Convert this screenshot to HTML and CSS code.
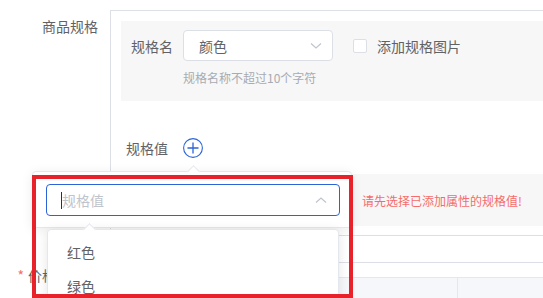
FILE: index.html
```html
<!DOCTYPE html>
<html lang="zh-CN">
  <head>
    <meta charset="UTF-8" />
    <meta name="viewport" content="width=device-width, initial-scale=1.0" />
    <title>商品规格</title>
    <link rel="stylesheet" href="styles.css">
  </head>
  <body>
    <div class="form-row">
      <label class="form-label">商品规格</label>
      <div class="spec-box">
        <div class="spec-name">
          <div class="name-row">
            <span class="item-label">规格名</span>
            <div class="select">
              <span>颜色</span>
              <svg class="chevron" width="12" height="8" viewBox="0 0 12 8"><path d="M1 1.5 L6 6 L11 1.5" fill="none" stroke="#c0c4cc" stroke-width="1.2"/></svg>
            </div>
            <label class="checkbox"><span class="box"></span>添加规格图片</label>
          </div>
          <p class="hint">规格名称不超过10个字符</p>
        </div>

        <div class="value-row">
          <span class="value-label">规格值</span>
          <span class="add-btn">
            <svg width="20" height="20" viewBox="0 0 20 20"><circle cx="10" cy="10" r="9.4" fill="none" stroke="#2c64d8" stroke-width="1.1"/><path d="M10 4.5 V15.5 M4.5 10 H15.5" stroke="#2c64d8" stroke-width="1.3"/></svg>
          </span>
        </div>

        <div class="value-box">
          <div class="value-slot"></div>
          <span class="error">请先选择已添加属性的规格值!</span>
        </div>
      </div>
    </div>

    <div class="form-row price-row">
      <label class="form-label required">价格及库存</label>
      <div class="sku-table">
        <div class="table-top"></div>
        <div class="table-head">
          <div class="th th-first"></div>
          <div class="th">规格值</div>
          <div class="th">规格值</div>
        </div>
      </div>
    </div>

    <!-- popover opened from the add button -->
    <div class="popover">
      <div class="fake-input">
        <span class="caret"></span>
        <span class="placeholder">规格值</span>
        <svg class="chevron-up" width="12" height="8" viewBox="0 0 12 8"><path d="M1 6.5 L6 2 L11 6.5" fill="none" stroke="#c0c4cc" stroke-width="1.2"/></svg>
      </div>
    </div>

    <ul class="dropdown">
      <li>红色</li>
      <li>绿色</li>
    </ul>

    <div class="highlight"></div>
  </body>
</html>
```

FILE: styles.css
```css
* {
  box-sizing: border-box;
  margin: 0;
  padding: 0;
}

body {
  font-family: "Noto Sans CJK SC", "Noto Sans", sans-serif;
  font-size: 14px;
  color: #606266;
  background: #fff;
  overflow: hidden;
  height: 298px;
  position: relative;
}

.form-row {
  display: flex;
  margin-top: 10px;
}

.form-label {
  width: 110px;
  flex-shrink: 0;
  text-align: right;
  padding: 6px 12px 0 0;
  line-height: 20px;
}

.spec-box {
  flex: 1;
  border: 1px solid #dcdfe6;
  border-right: none;
  padding: 10px 0 9px 10px;
}

.spec-name {
  background: #f7f7f7;
  padding: 9px 10px 15px;
}

.name-row {
  display: flex;
  align-items: center;
}

.item-label {
  width: 52px;
}

.select {
  width: 150px;
  height: 31px;
  border: 1px solid #dcdfe6;
  border-radius: 4px;
  background: #fff;
  display: flex;
  align-items: center;
  justify-content: space-between;
  padding: 0 10px 0 15px;
  color: #606266;
}

.checkbox {
  display: flex;
  align-items: center;
  margin-left: 20px;
}

.checkbox .box {
  width: 14px;
  height: 14px;
  border: 1px solid #dcdfe6;
  border-radius: 2px;
  background: #fff;
  margin-right: 10px;
}

.hint {
  margin: 9px 0 0 52px;
  font-size: 12px;
  line-height: 16px;
  color: #a8abb2;
}

.value-row {
  display: flex;
  align-items: center;
  margin: 37px 0 0 5px;
  height: 20px;
}

.add-btn {
  display: flex;
  margin-left: 15px;
}

.value-box {
  display: flex;
  align-items: center;
  margin-top: 16px;
  height: 52px;
  background: #f7f7f7;
}

.value-slot {
  width: 231px;
  flex-shrink: 0;
}

.error {
  margin-left: 10px;
  font-size: 12px;
  color: #f56c6c;
  white-space: nowrap;
}

.price-row {
  margin-top: 26px;
}

.required::before {
  content: "*";
  color: #f56c6c;
  margin-right: 4px;
}

.price-row .form-label {
  padding-top: 3px;
}

.sku-table {
  flex: 1;
  margin-left: 11px;
  border-top: 1px solid #dcdfe6;
}

.table-top {
  height: 15px;
  border-bottom: 1px solid #e4e7ed;
}

.table-head {
  display: flex;
  background: #f5f7fa;
  height: 50px;
}

.th {
  width: 121px;
  padding: 16px 0 0 18px;
  line-height: 20px;
  border-right: 1px solid #e4e7ed;
  white-space: nowrap;
}

.th-first {
  width: 216px;
}

.popover {
  position: absolute;
  left: 32px;
  top: 171px;
  width: 320px;
  height: 57px;
  background: #fff;
  border: 1px solid #e4e7ed;
  border-radius: 4px;
  box-shadow: 0 2px 12px rgba(0, 0, 0, 0.08);
  padding: 12px 0 0 13px;
}

.popover::before {
  content: "";
  position: absolute;
  left: 156px;
  top: -5px;
  width: 8px;
  height: 8px;
  background: #fff;
  border-left: 1px solid #e4e7ed;
  border-top: 1px solid #e4e7ed;
  transform: rotate(45deg);
}

.fake-input {
  width: 294px;
  height: 32px;
  border: 1px solid #2c64d8;
  border-radius: 4px;
  display: flex;
  align-items: center;
  padding: 0 12px 0 14px;
}

.caret {
  width: 1px;
  height: 17px;
  background: #303133;
}

.placeholder {
  color: #c0c4cc;
  flex: 1;
}

.dropdown {
  position: absolute;
  left: 47px;
  top: 229px;
  width: 292px;
  height: 90px;
  list-style: none;
  background: #fff;
  border: 1px solid #e4e7ed;
  border-radius: 4px;
  box-shadow: 0 2px 12px rgba(0, 0, 0, 0.1);
  padding-top: 5px;
}

.dropdown::before {
  content: "";
  position: absolute;
  left: 37px;
  top: -5px;
  width: 8px;
  height: 8px;
  background: #fff;
  border-left: 1px solid #e4e7ed;
  border-top: 1px solid #e4e7ed;
  transform: rotate(45deg);
}

.dropdown li {
  height: 34px;
  line-height: 34px;
  padding-left: 19px;
}

.highlight {
  position: absolute;
  left: 32px;
  top: 175px;
  width: 321px;
  height: 123px;
  border: 4px solid #e8222b;
}
```
